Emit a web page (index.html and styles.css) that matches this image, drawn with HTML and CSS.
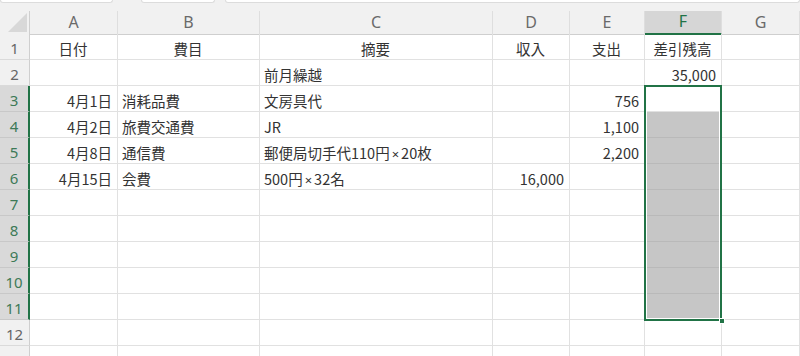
FILE: index.html
```html
<!DOCTYPE html>
<html lang="ja">

<head>
    <meta charset="UTF-8">
    <title>出納帳</title>
    <link rel="stylesheet" href="styles.css">
</head>

<body>
    <div class="topbar">
        <span class="box nameBox"></span>
        <span class="box fxBox"></span>
        <span class="box formulaBox"></span>
    </div>

    <div class="sheet">
        <div class="row colHead">
            <div class="corner">
                <svg width="30" height="23" viewBox="0 0 30 23"><polygon points="27,2 27,21 8,21" fill="#d8d8d8" /></svg>
            </div>
            <div class="colName">A</div>
            <div class="colName">B</div>
            <div class="colName">C</div>
            <div class="colName">D</div>
            <div class="colName">E</div>
            <div class="colName active">F</div>
            <div class="colName">G</div>
        </div>

        <div class="row">
            <div class="num">1</div>
            <div class="cell center">日付</div>
            <div class="cell center">費目</div>
            <div class="cell center">摘要</div>
            <div class="cell center">収入</div>
            <div class="cell center">支出</div>
            <div class="cell center">差引残高</div>
            <div class="cell"></div>
        </div>
        <div class="row">
            <div class="num">2</div>
            <div class="cell"></div>
            <div class="cell"></div>
            <div class="cell">前月繰越</div>
            <div class="cell"></div>
            <div class="cell"></div>
            <div class="cell right">35,000</div>
            <div class="cell"></div>
        </div>
        <div class="row">
            <div class="num active">3</div>
            <div class="cell right">4月1日</div>
            <div class="cell">消耗品費</div>
            <div class="cell">文房具代</div>
            <div class="cell"></div>
            <div class="cell right">756</div>
            <div class="cell"></div>
            <div class="cell"></div>
        </div>
        <div class="row">
            <div class="num active">4</div>
            <div class="cell right">4月2日</div>
            <div class="cell">旅費交通費</div>
            <div class="cell">JR</div>
            <div class="cell"></div>
            <div class="cell right">1,100</div>
            <div class="cell picked"></div>
            <div class="cell"></div>
        </div>
        <div class="row">
            <div class="num active">5</div>
            <div class="cell right">4月8日</div>
            <div class="cell">通信費</div>
            <div class="cell">郵便局切手代110円<span class="times">×</span>20枚</div>
            <div class="cell"></div>
            <div class="cell right">2,200</div>
            <div class="cell picked"></div>
            <div class="cell"></div>
        </div>
        <div class="row">
            <div class="num active">6</div>
            <div class="cell right">4月15日</div>
            <div class="cell">会費</div>
            <div class="cell">500円<span class="times">×</span>32名</div>
            <div class="cell right">16,000</div>
            <div class="cell"></div>
            <div class="cell picked"></div>
            <div class="cell"></div>
        </div>
        <div class="row">
            <div class="num active">7</div>
            <div class="cell"></div><div class="cell"></div><div class="cell"></div><div class="cell"></div><div class="cell"></div>
            <div class="cell picked"></div><div class="cell"></div>
        </div>
        <div class="row">
            <div class="num active">8</div>
            <div class="cell"></div><div class="cell"></div><div class="cell"></div><div class="cell"></div><div class="cell"></div>
            <div class="cell picked"></div><div class="cell"></div>
        </div>
        <div class="row">
            <div class="num active">9</div>
            <div class="cell"></div><div class="cell"></div><div class="cell"></div><div class="cell"></div><div class="cell"></div>
            <div class="cell picked"></div><div class="cell"></div>
        </div>
        <div class="row">
            <div class="num active">10</div>
            <div class="cell"></div><div class="cell"></div><div class="cell"></div><div class="cell"></div><div class="cell"></div>
            <div class="cell picked"></div><div class="cell"></div>
        </div>
        <div class="row">
            <div class="num active">11</div>
            <div class="cell"></div><div class="cell"></div><div class="cell"></div><div class="cell"></div><div class="cell"></div>
            <div class="cell picked"></div><div class="cell"></div>
        </div>
        <div class="row">
            <div class="num">12</div>
            <div class="cell"></div><div class="cell"></div><div class="cell"></div><div class="cell"></div><div class="cell"></div>
            <div class="cell"></div><div class="cell"></div>
        </div>
        <div class="row">
            <div class="num">13</div>
            <div class="cell"></div><div class="cell"></div><div class="cell"></div><div class="cell"></div><div class="cell"></div>
            <div class="cell"></div><div class="cell"></div>
        </div>

        <!-- 選択範囲 F3:F11 -->
        <div class="selection"><span class="handle"></span></div>
    </div>
</body>

</html>
```

FILE: styles.css
```css
* {
    box-sizing: border-box;
}

body {
    margin: 0;
    width: 800px;
    height: 356px;
    overflow: hidden;
    background: #fff;
    font-family: "Noto Sans CJK JP", "Noto Sans", sans-serif;
    color: #333;
}

.topbar {
    height: 11px;
    background: #f1f1f1;
    display: flex;
    align-items: flex-start;
}

.box {
    height: 3px;
    background: #fff;
    border: 1px solid #dcdcdc;
    border-top: 0;
    border-radius: 0 0 3px 3px;
}

.nameBox {
    width: 113px;
}

.fxBox {
    width: 74px;
    margin-left: 28px;
}

.formulaBox {
    flex: 1;
    margin-left: 10px;
}

.sheet {
    position: relative;
}

.row {
    display: grid;
    grid-template-columns: 30px 88px 142px 233px 77px 75px 77px 78px;
    height: 26px;
}

.colHead {
    height: 23px;
    background: #f1f1f1;
}

.corner {
    border-bottom: 1px solid #cfcfcf;
    border-right: 1px solid #cfcfcf;
    line-height: 0;
}

.colName {
    font-family: "Noto Sans", sans-serif;
    font-size: 16px;
    color: #6a6a6a;
    text-align: center;
    line-height: 22px;
    border-bottom: 1px solid #cfcfcf;
    border-right: 1px solid #dedede;
}

.colName.active {
    background: #d6d6d6;
    color: #217346;
    border-bottom: 2px solid #217346;
    line-height: 21px;
}

.num {
    font-family: "Noto Sans", sans-serif;
    font-size: 15px;
    color: #666;
    background: #f1f1f1;
    text-align: center;
    padding-top: 3px;
    line-height: 22px;
    border-bottom: 1px solid #dadada;
    border-right: 1px solid #cfcfcf;
}

.num.active {
    background: #d9d9d9;
    color: #3d7a57;
    border-right: 2px solid #217346;
    border-bottom-color: #c8c8c8;
}

.cell {
    font-size: 14.5px;
    padding: 4px 5px 0 4px;
    line-height: 21px;
    white-space: nowrap;
    overflow: hidden;
    border-bottom: 1px solid #e1e1e1;
    border-right: 1px solid #e1e1e1;
}

.times {
    font-family: "Noto Sans", sans-serif;
    font-size: 13px;
    margin: 0 2px;
}

.center {
    text-align: center;
}

.right {
    text-align: right;
}

.picked {
    background: #c6c6c6;
    border-bottom-color: #b9b9b9;
}

.selection {
    position: absolute;
    left: 644px;
    top: 74px;
    width: 78px;
    height: 236px;
    border: 2px solid #217346;
    box-shadow: inset 0 0 0 1px #fff;
}

.handle {
    position: absolute;
    right: -5px;
    bottom: -5px;
    width: 6px;
    height: 6px;
    background: #217346;
    border: 1px solid #fff;
}
```
